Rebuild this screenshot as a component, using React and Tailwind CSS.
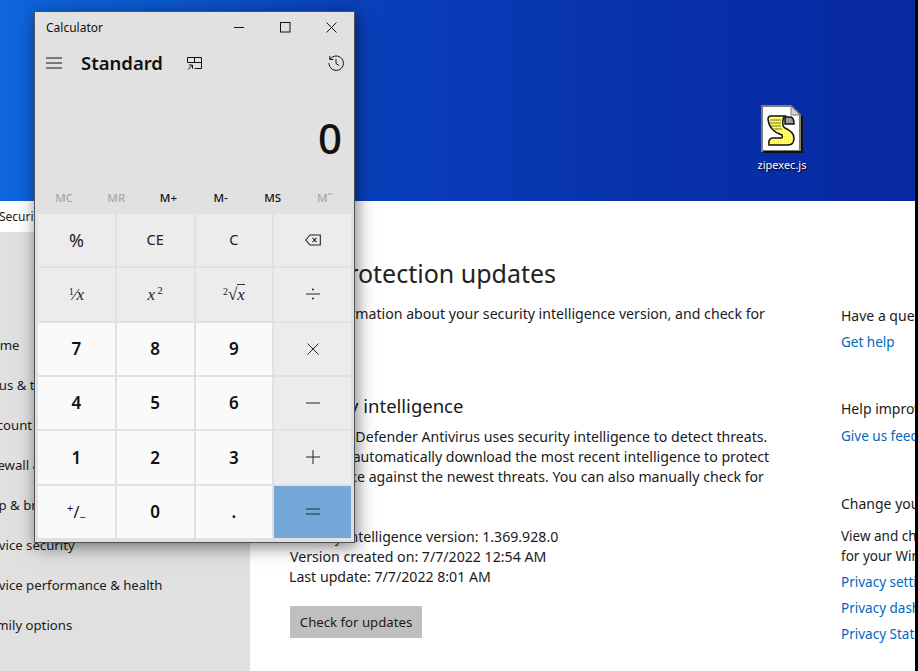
const F = "font-['Noto_Sans',sans-serif]";

function Key({ children, kind = 'fn' }) {
  const cls =
    kind === 'num'
      ? 'bg-[#fafafa] text-[17px] font-semibold text-[#111]'
      : kind === 'eq'
      ? 'bg-[#74a6d8] text-[#1c2c3c]'
      : 'bg-[#ececec] text-[#222]';
  return <div className={`flex items-center justify-center ${cls}`}>{children}</div>;
}

const Ico = ({ children, w = 16, h = 16 }) => (
  <svg width={w} height={h} viewBox={`0 0 ${w} ${h}`} fill="none" stroke="currentColor" strokeWidth="1">
    {children}
  </svg>
);

function Calculator() {
  return (
    <div className="absolute left-[34px] top-[11px] w-[321px] h-[532px] bg-[#e1e1e1] border border-[#4d5256] shadow-[2px_4px_16px_rgba(0,0,0,0.5)] flex flex-col text-[#111]">
      <div className="h-[31px] flex items-center pl-[11px] text-[12px]">
        <span className="flex-1 pt-px">Calculator</span>
        <div className="flex items-center text-[#111]">
          <div className="w-[46px] flex justify-center"><Ico w={11} h={11}><path d="M0 5.500h10" /></Ico></div>
          <div className="w-[46px] flex justify-center"><Ico w={11} h={11}><rect x="0.500" y="0.500" width="9.500" height="9.500" /></Ico></div>
          <div className="w-[46px] flex justify-center"><Ico w={11} h={11}><path d="M0.500 0.500l10 10M10.500 0.500l-10 10" /></Ico></div>
        </div>
      </div>
      <div className="h-[40px] flex items-center pl-[11px] pr-[9px]">
        <Ico w={17} h={12}><path d="M0 1h16M0 6h16M0 11h16" /></Ico>
        <span className="ml-[18px] text-[18.500px] font-semibold leading-none">Standard</span>
        <span className="ml-[24px] flex">
          <Ico w={15} h={13}><path d="M0.500 5.500V0.500h14v11h-7M0.500 5.500h14M7.500 0.500v5M1 12.500l4.500-4.500M1.800 8h3.700v3.700" /></Ico>
        </span>
        <span className="ml-auto flex">
          <svg width="18" height="18" viewBox="0 0 18 18" fill="none" stroke="currentColor" strokeWidth="1">
            <path d="M3.200 5.200A7.200 7.200 0 1 1 2 9M2.800 2v3.500h3.500M9 5v4.500l3 2" />
          </svg>
        </span>
      </div>
      <div className="h-[104px] flex items-center justify-end pr-[12px] pt-[6px] text-[42px] font-medium leading-none">0</div>
      <div className="h-[22px] grid grid-cols-6 px-[3px] text-[11.500px] font-medium items-center text-center">
        <span className="text-[#a8a8a8]">MC</span>
        <span className="text-[#a8a8a8]">MR</span>
        <span>M+</span>
        <span>M-</span>
        <span>MS</span>
        <span className="text-[#a8a8a8]">M˜</span>
      </div>
      <div className="mt-[5px] mx-[3px] h-[324px] grid grid-cols-4 grid-rows-6 gap-[2px] text-[14.500px]">
        <Key><span className="text-[18px]">%</span></Key>
        <Key>CE</Key>
        <Key>C</Key>
        <Key>
          <svg width="16" height="12" viewBox="0 0 16 12" fill="none" stroke="currentColor" strokeWidth="1.100">
            <path d="M0.800 6L5 1h10.300v10H5zM7.500 3.800l4 4.400M11.500 3.800l-4 4.400" />
          </svg>
        </Key>
        <Key><span className="font-['Liberation_Serif',serif] text-[17px] leading-none"><sup className="text-[10px]">1</sup>⁄<i>x</i></span></Key>
        <Key><span className="font-['Liberation_Serif',serif] text-[17px] leading-none"><i>x</i><sup className="text-[11px] ml-[2px]">2</sup></span></Key>
        <Key><span className="font-['Liberation_Serif',serif] text-[17px] leading-none"><sup className="text-[10px]">2</sup>√<i className="border-t border-[#333]">x</i></span></Key>
        <Key><svg width="14" height="12" viewBox="0 0 14 12" fill="currentColor"><path d="M0 5.500h14v1H0z" /><circle cx="7" cy="1.500" r="1" /><circle cx="7" cy="10.500" r="1" /></svg></Key>
        <Key kind="num">7</Key>
        <Key kind="num">8</Key>
        <Key kind="num">9</Key>
        <Key><Ico w={12} h={12}><path d="M0.500 0.500l11 11M11.500 0.500l-11 11" /></Ico></Key>
        <Key kind="num">4</Key>
        <Key kind="num">5</Key>
        <Key kind="num">6</Key>
        <Key><Ico w={14} h={2}><path d="M0 1h14" /></Ico></Key>
        <Key kind="num">1</Key>
        <Key kind="num">2</Key>
        <Key kind="num">3</Key>
        <Key><Ico w={14} h={14}><path d="M0 7h14M7 0v14" /></Ico></Key>
        <Key kind="num"><span className="text-[16px] font-normal leading-none"><sup className="text-[11px]">+</sup>/<sub className="text-[11px]">−</sub></span></Key>
        <Key kind="num">0</Key>
        <Key kind="num">.</Key>
        <Key kind="eq"><Ico w={14} h={7}><path d="M0 1h14M0 6h14" /></Ico></Key>
      </div>
    </div>
  );
}

function ScriptIcon() {
  return (
    <svg width="42" height="48" viewBox="0 0 42 48">
      <defs>
        <pattern id="dither" width="2" height="2" patternUnits="userSpaceOnUse">
          <rect width="2" height="2" fill="#fbf55a" />
          <rect width="1" height="1" fill="#fff" />
        </pattern>
      </defs>
      <path d="M1 1h29l9 9v36H1z" fill="#fff" stroke="#7c7c7c" strokeWidth="2" />
      <path d="M30 1v9h9z" fill="#d4d4d4" stroke="#7c7c7c" />
      <path d="M2 47h39V11" fill="none" stroke="#111" strokeWidth="2" />
      <path d="M24 12h6q3 1 3 7h-9z" fill="#9a9a9a" stroke="#111" strokeWidth="1.500" />
      <path d="M7 14Q7 11 10 11H24Q21 14 22 20Q22 22 24 23Q33 27 33 33Q33 40 27 40H8Q7 34 11 33H20Q22 33 21 30Q8 26 7 14z" fill="url(#dither)" stroke="#111" strokeWidth="1.500" />
      <path d="M9 15h11M9 18h11M10 21h10M12 24h9" stroke="#77773a" strokeWidth="1" />
    </svg>
  );
}

const NAV = [
  'Home',
  'Virus & threat protection',
  'Account protection',
  'Firewall & network protection',
  'App & browser control',
  'Device security',
  'Device performance & health',
  'Family options',
];

export default function App() {
  return (
    <div className={`relative w-[918px] h-[671px] overflow-hidden bg-black flex ${F} text-[#1a1a1a]`}>
      <div className="w-[915px] shrink-0 bg-white flex flex-col">
        <div className="h-[201px] shrink-0 flex bg-[linear-gradient(90deg,#0f66dc_0%,#0b55cc_20%,#0a40bb_39%,#0833ae_66%,#0728a0_100%)]">
          <div className="ml-auto mr-[93px] mt-[105px] flex flex-col items-center w-[80px]">
            <ScriptIcon />
            <span className="text-[11px] text-white mt-[4px] [text-shadow:1px_1px_2px_#000]">zipexec.js</span>
          </div>
        </div>
        <div className="flex flex-1 min-h-0">
          <aside className="w-[250px] shrink-0 flex flex-col overflow-hidden">
            <div className="h-[31px] bg-white flex items-center text-[12px] whitespace-nowrap">
              <span className="-ml-[1px]">Security</span>
            </div>
            <div className="flex-1 bg-[#e0e0e0] text-[13.200px] whitespace-nowrap flex flex-col pt-[94px]">
              {NAV.map((t) => (
                <div key={t} className="h-[40px] flex items-center -ml-[18px]">{t}</div>
              ))}
            </div>
          </aside>
          <main className="flex-1 flex min-w-0">
            <div className="w-[591px] shrink-0 pl-[39px] text-[14.150px] leading-[20px]">
              <h1 className="mt-[54px] ml-[44px] text-[25px] leading-[36px] text-[#222] whitespace-nowrap">Protection updates</h1>
              <p className="mt-[13px] w-[480px]">View information about your security intelligence version, and check for updates.</p>
              <h2 className="mt-[49px] text-[18.500px] leading-[26px]">Security intelligence</h2>
              <p className="mt-[8px] w-[490px]">Microsoft Defender Antivirus uses security intelligence to detect threats. We try to automatically download the most recent intelligence to protect your device against the newest threats. You can also manually check for updates.</p>
              <div className="mt-[20px]">
                <p>Security intelligence version: 1.369.928.0</p>
                <p className="pl-px">Version created on: 7/7/2022 12:54 AM</p>
                <p>Last update: 7/7/2022 8:01 AM</p>
              </div>
              <button className="mt-[19px] ml-px h-[32px] w-[132px] bg-[#bfbfbf] text-[13.200px]">Check for updates</button>
            </div>
            <div className="flex-1 min-w-0 whitespace-nowrap overflow-hidden text-[13.500px] leading-[20px]">
              <p className="mt-[105px] text-[14px]">Have a question?</p>
              <p className="mt-[6px] text-[#0067c0]">Get help</p>
              <p className="mt-[47px] text-[14px]">Help improve Windows Security</p>
              <p className="mt-[7px] text-[#0067c0]">Give us feedback</p>
              <p className="mt-[48px] text-[14px]">Change your privacy settings</p>
              <p className="mt-[12px]">View and change privacy settings</p>
              <p>for your Windows 10 device.</p>
              <p className="mt-[6px] text-[#0067c0]">Privacy settings</p>
              <p className="mt-[6px] text-[#0067c0]">Privacy dashboard</p>
              <p className="mt-[6px] text-[#0067c0]">Privacy Statement</p>
            </div>
          </main>
        </div>
      </div>
      <Calculator />
    </div>
  );
}
